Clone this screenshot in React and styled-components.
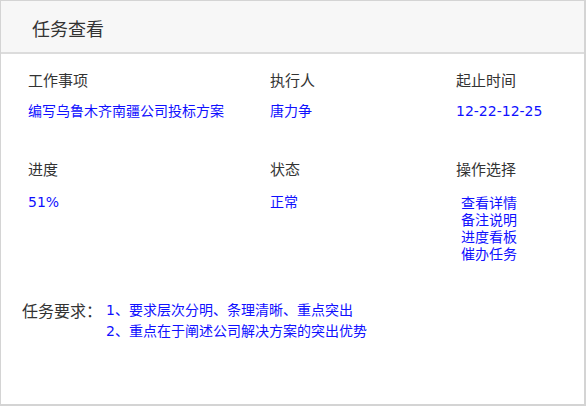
import React from "react";
import styled, { createGlobalStyle } from "styled-components";

const Global = createGlobalStyle`
  html, body { margin: 0; padding: 0; background: #fff; }
  body { font-family: "Microsoft YaHei", "Noto Sans CJK SC", "Noto Sans", sans-serif; }
  * { box-sizing: border-box; }
`;

const blueFont = `"DejaVu Sans", "Noto Sans CJK SC", sans-serif`;

const Card = styled.div`
  width: 586px;
  height: 406px;
  border: 1px solid #d4d4d4;
  border-right: 2px solid #d4d4d4;
  border-bottom: 2px solid #d4d4d4;
  background: #fff;
  display: flex;
  flex-direction: column;
`;

const Header = styled.div`
  height: 53px;
  background: #f7f7f7;
  border-bottom: 2px solid #dcdcdc;
  padding: 3px 0 0 31px;
  display: flex;
  align-items: center;
  font-size: 18px;
  color: #333;
`;

const Body = styled.div`
  padding: 16px 0 0 27px;
  display: flex;
  flex-direction: column;
`;

const Grid = styled.div`
  display: grid;
  grid-template-columns: 242px 186px 1fr;
  row-gap: ${(p) => p.$gap}px;
`;

const Cell = styled.div`
  display: flex;
  flex-direction: column;
`;

const Label = styled.div`
  font-size: 15px;
  line-height: 20px;
  color: #333;
  margin-bottom: ${(p) => p.$mb ?? 13}px;
`;

const Value = styled.div`
  font-family: ${blueFont};
  font-size: 14px;
  line-height: 17px;
  color: #1010ff;
`;

const ActionList = styled.div`
  display: flex;
  flex-direction: column;
  padding-left: 5px;
`;

const Action = styled.a`
  font-size: 14px;
  line-height: 17px;
  color: #1010ff;
  text-decoration: none;
  cursor: pointer;
`;

const Req = styled.div`
  display: flex;
  margin-top: 38px;
  margin-left: -6px;
`;

const ReqLabel = styled.div`
  font-size: 16px;
  line-height: 21px;
  color: #333;
  width: 84px;
`;

const ReqList = styled.div`
  display: flex;
  flex-direction: column;
`;

const ReqItem = styled.div`
  font-family: ${blueFont};
  font-size: 14px;
  line-height: 21px;
  color: #1010ff;
`;

export default function App() {
  return (
    <>
      <Global />
      <Card>
        <Header>任务查看</Header>
        <Body>
          <Grid $gap={39}>
            <Cell>
              <Label>工作事项</Label>
              <Value>编写乌鲁木齐南疆公司投标方案</Value>
            </Cell>
            <Cell>
              <Label>执行人</Label>
              <Value>唐力争</Value>
            </Cell>
            <Cell>
              <Label>起止时间</Label>
              <Value>12-22-12-25</Value>
            </Cell>
            <Cell>
              <Label $mb={15}>进度</Label>
              <Value>51%</Value>
            </Cell>
            <Cell>
              <Label $mb={15}>状态</Label>
              <Value>正常</Value>
            </Cell>
            <Cell>
              <Label $mb={15}>操作选择</Label>
              <ActionList>
                <Action>查看详情</Action>
                <Action>备注说明</Action>
                <Action>进度看板</Action>
                <Action>催办任务</Action>
              </ActionList>
            </Cell>
          </Grid>
          <Req>
            <ReqLabel>任务要求：</ReqLabel>
            <ReqList>
              <ReqItem>1、要求层次分明、条理清晰、重点突出</ReqItem>
              <ReqItem>2、重点在于阐述公司解决方案的突出优势</ReqItem>
            </ReqList>
          </Req>
        </Body>
      </Card>
    </>
  );
}
